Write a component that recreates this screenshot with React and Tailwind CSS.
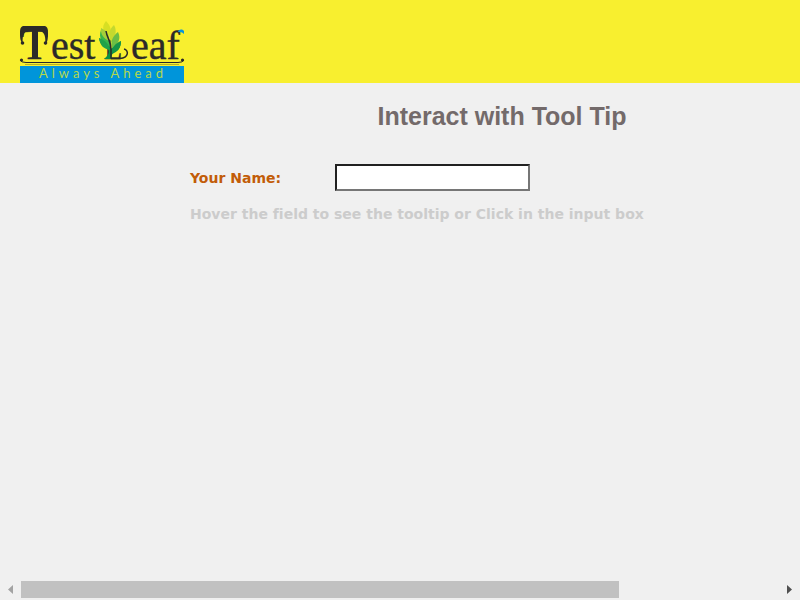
function Logo() {
  return (
    <svg viewBox="0 0 164 62" role="img" aria-label="TestLeaf, Always Ahead" className="block h-[62px] w-[164px] overflow-visible">
      <g fill="#2b2a29" stroke="#2b2a29" strokeWidth="0.4" style={{ fontFamily: '"Liberation Serif", serif' }}>
        <text x="1" y="38" fontSize="44">T</text>
        <text x="31" y="38" fontSize="40">est</text>
        <text x="84" y="38" fontSize="30">L</text>
        <text x="111" y="38" fontSize="40">eaf</text>
      </g>
      <g fill="#2b2a29">
        <path d="M4 5H24C27 5 28 7 28 12C28 16 28 21 25 24C26 17 25 11 20 10H8C3 11 2 17 3 23C0 20 0 16 0 12C0 7 1 5 4 5Z" />
        <rect x="12" y="8" width="6" height="29" />
        <circle cx="2.500" cy="22" r="1.800" />
        <circle cx="25.500" cy="22" r="1.800" />
        <circle cx="1.500" cy="39" r="1.600" />
        <circle cx="162.500" cy="39" r="1.600" />
      </g>
      <path d="M0 39Q1 41.500 6 41.500H158Q163 41.500 164 39" fill="none" stroke="#2b2a29" strokeWidth="1" />
      <path d="M5 43.500H159" stroke="#b9b126" strokeWidth="1" />
      <path d="M91 37.500H100C109 37 109 29 104 28" fill="none" stroke="#2b2a29" strokeWidth="1.500" />
      <path d="M84 38C89 34 90 30 87 27C83 24 80 24 79 17C83 20 88 21 91 28C93 25 98 23 101 20C101 27 98 30 94 32C90 34 93 36 90 38Z" fill="#079247" />
      <path d="M81 9C78 17 82 22 90 26C90 18 87 12 81 9Z" fill="#39b54a" />
      <path d="M79 17C80 25 84 28 90 29C89 23 85 19 79 17Z" fill="#22a249" />
      <path d="M86 0C81 6 83 11 89 15C92 10 91 5 86 0Z" fill="#d7df23" />
      <path d="M81 7C80 13 84 18 89 20C90 14 86 9 81 7Z" fill="#a6ce39" />
      <path d="M94 4C89 8 88 15 91 21C96 16 97 9 94 4Z" fill="#c4d92e" />
      <path d="M98 11C93 15 90 20 92 27C99 23 101 17 98 11Z" fill="#6cbd45" />
      <path d="M101 20C96 22 92 26 91 32C98 31 101 26 101 20Z" fill="#159447" />
      <path d="M86 10C87 17 91 20 91 28V37" fill="none" stroke="#2b2a29" strokeWidth="1.500" />
      <path d="M158 11C159 8 162 8 164 10V13C162 11 160 11 158 11Z" fill="#0a94dc" />
      <rect y="45" width="164" height="17" fill="#0095da" />
      <text x="19" y="57" fontSize="13" fill="#b5d84b" letterSpacing="4" style={{ fontFamily: 'Lato, sans-serif' }}>
        Always Ahead
      </text>
    </svg>
  );
}

function ScrollBar() {
  return (
    <div className="flex h-[19px] items-start">
      <button type="button" aria-label="Scroll left" className="flex h-[17px] w-[21px] items-center justify-center">
        <svg viewBox="0 0 5 9" className="h-[9px] w-[5px]" fill="#a3a3a3"><path d="M5 0V9L0 4.500Z" /></svg>
      </button>
      <div className="h-[17px] flex-1">
        <div className="h-full w-[78.9%] bg-[#c1c1c1]" />
      </div>
      <button type="button" aria-label="Scroll right" className="flex h-[17px] w-[21px] items-center justify-center">
        <svg viewBox="0 0 5 9" className="h-[9px] w-[5px]" fill="#505050"><path d="M0 0V9L5 4.500Z" /></svg>
      </button>
    </div>
  );
}

export default function App() {
  return (
    <div className="flex min-h-screen flex-col overflow-hidden bg-[#f0f0f0]">
      <header className="flex bg-[#f8ef2f] pt-[21px] pl-5">
        <a href="#home"><Logo /></a>
      </header>
      <main className="min-w-[1004px] flex-1">
        <div className="mx-auto w-[624px] pt-[15px] font-[Verdana,'DejaVu_Sans',sans-serif] text-sm font-bold [font-variant-ligatures:none]">
          <h1 className="text-center font-['Liberation_Sans',sans-serif] text-[25px] leading-9 text-[#736a6a]">
            Interact with Tool Tip
          </h1>
          <div className="mt-[30px] flex items-center">
            <label htmlFor="name" className="w-[145px] text-[#c25c08]">Your Name:</label>
            <input
              id="name"
              type="text"
              title="Enter your Name"
              className="h-[27px] w-[195px] border-2 border-t-[#212121] border-r-[#767676] border-b-[#767676] border-l-[#212121] bg-white px-1 font-normal outline-none"
            />
          </div>
          <p className="mt-[13px] text-[#cccccc]">Hover the field to see the tooltip or Click in the input box</p>
        </div>
      </main>
      <ScrollBar />
    </div>
  );
}
